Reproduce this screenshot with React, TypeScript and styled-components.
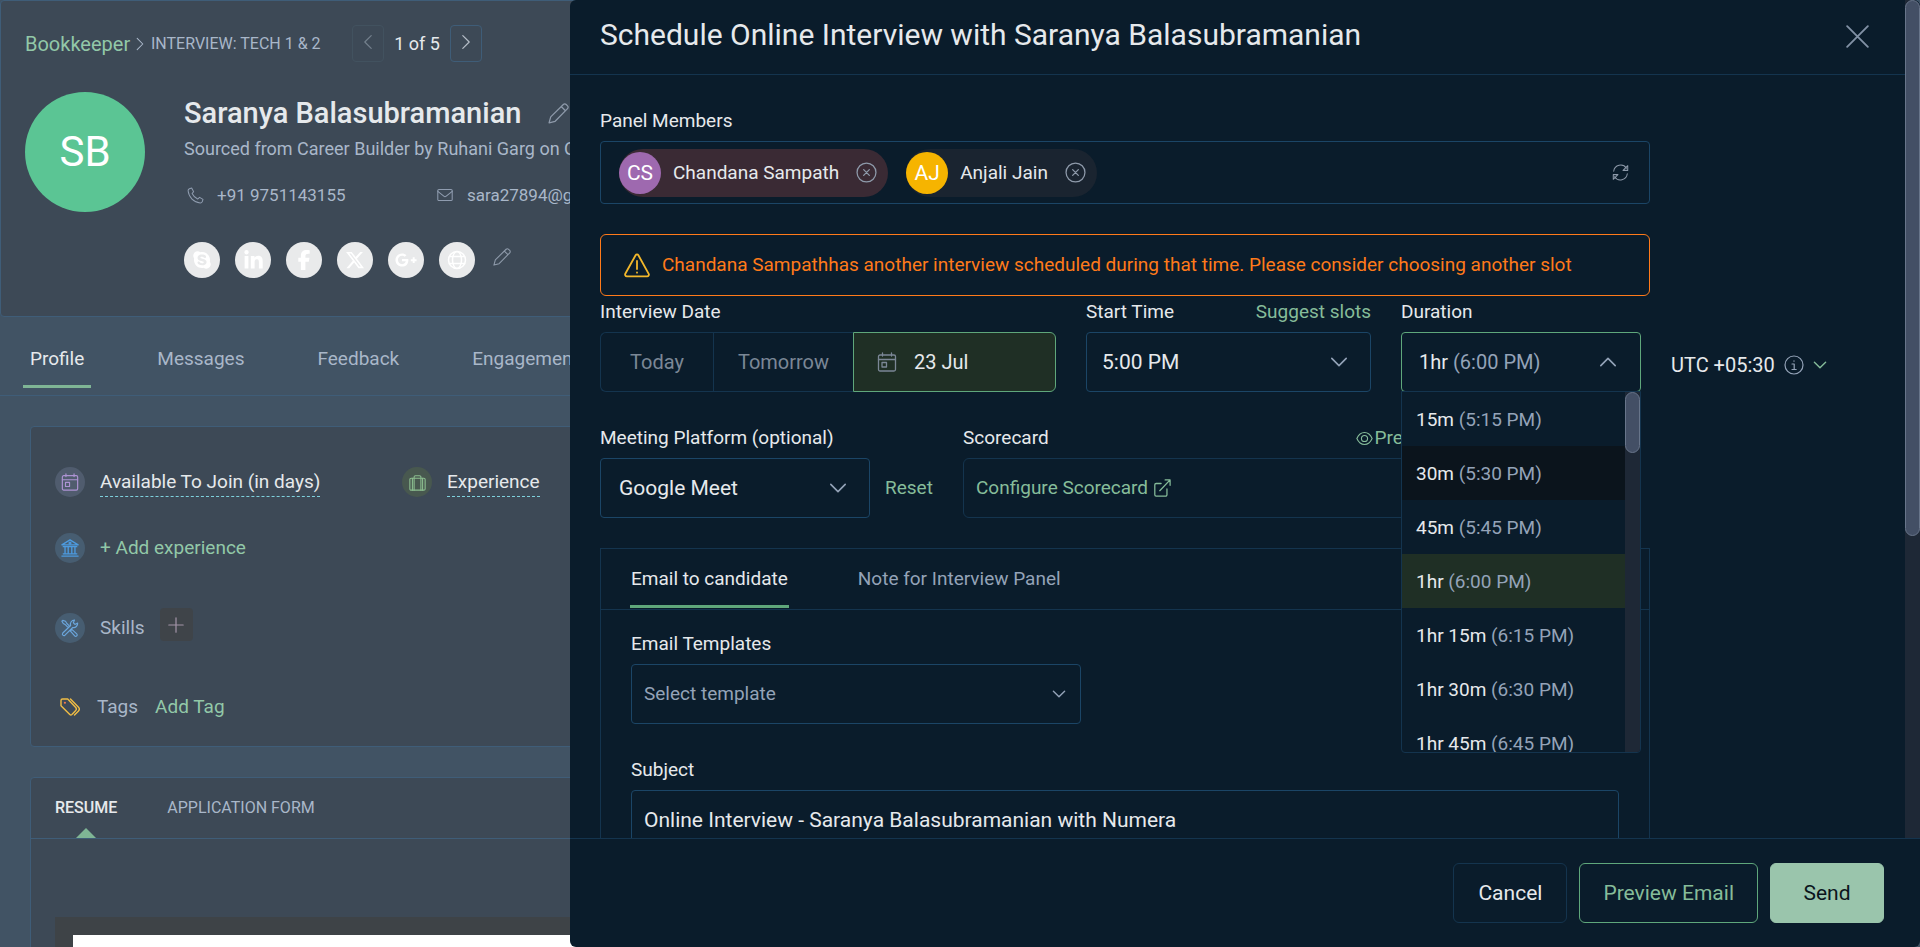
import React, { useState } from "react";
import type { ReactNode } from "react";
import styled, { createGlobalStyle, css } from "styled-components";
import { FaSkype, FaLinkedinIn, FaFacebookF, FaGooglePlusG, FaXTwitter } from "react-icons/fa6";

const color = {
  panel: "#0a1c2b",
  line: "#14344e",
  field: "#1b4566",
  text: "#e6e9ec",
  muted: "#94a3b8",
  dim: "#7b8796",
  green: "#86bc9a",
  greenLine: "#5fa77b",
  greenFill: "#1f2f25",
  orange: "#ff7a1a",
  page: "#415364",
  card: "#3d4956",
  cardLine: "#3f5d78",
  pageMuted: "#a9b7c9",
  pageGreen: "#92c8a8",
  track: "#1e2836",
  thumb: "#434f65",
};

const GlobalStyle = createGlobalStyle`
  *, *::before, *::after { box-sizing: border-box; }
  body {
    margin: 0;
    overflow: hidden;
    background: ${color.page};
    color: ${color.text};
    font: 400 19px/24px Roboto, "Liberation Sans", sans-serif;
  }
  button, input, select { font: inherit; color: inherit; }
  button { background: none; border: 0; padding: 0; cursor: pointer; }
  a { color: inherit; text-decoration: none; }
  h1, h2, p, ul { margin: 0; padding: 0; font-weight: 400; }
  svg { display: block; flex: none; }
`;

/* ---------- icons ---------- */

type IconProps = { size?: number; stroke?: number; box?: string; children: ReactNode };

const Line = ({ size = 20, stroke = 1, box = "0 0 20 20", children }: IconProps) => (
  <svg
    width={size}
    height={size}
    viewBox={box}
    fill="none"
    stroke="currentColor"
    strokeWidth={stroke}
    strokeLinecap="round"
    strokeLinejoin="round"
    aria-hidden="true"
  >
    {children}
  </svg>
);

const Chevron = ({ dir, size, stroke = 2 }: { dir: "up" | "down" | "left" | "right"; size: number; stroke?: number }) => {
  const d = {
    up: "M2 14l8-8 8 8",
    down: "M2 6l8 8 8-8",
    left: "M14 2l-8 8 8 8",
    right: "M6 2l8 8-8 8",
  }[dir];
  return (
    <Line size={size} stroke={stroke}>
      <path d={d} />
    </Line>
  );
};

const Pencil = ({ size }: { size: number }) => (
  <Line size={size} stroke={1.2}>
    <path d="M1 19l1.600-5.800L14.600 1.400a1.900 1.900 0 0 1 2.700 0l1.300 1.300a1.900 1.900 0 0 1 0 2.700L6.800 17.400 1 19zM12.600 3.400l4 4" />
  </Line>
);

const CalendarIcon = ({ size }: { size: number }) => (
  <Line size={size} stroke={1.3}>
    <rect x="1.5" y="3" width="17" height="16" rx="1.5" />
    <path d="M1.5 7.5h17M5.5 1v3M14.5 1v3" />
    <rect x="5" y="10.5" width="4.5" height="4.5" />
  </Line>
);

const CaseIcon = () => (
  <Line size={17} stroke={1.3}>
    <rect x="1" y="5" width="18" height="14" rx="1.5" />
    <path d="M6 19V3.5A1.5 1.5 0 0 1 7.500 2h5A1.500 1.500 0 0 1 14 3.500V19M4 5v14M16 5v14" />
  </Line>
);

const BankIcon = () => (
  <Line size={18} stroke={1.5}>
    <path d="M1 6.500L10 1l9 5.500zM2.500 8.500h15M4.500 8.500v7M8 8.500v7M12 8.500v7M15.500 8.500v7M2.500 16.500h15M1 19h18" />
    <circle cx="10" cy="4.500" r="1" />
  </Line>
);

const ToolsIcon = () => (
  <Line size={18} stroke={1.3}>
    <path d="M2 1.500l3 1 1.500 2.500 3 3-1.500 1.500-3-3L2.500 5 1 2.500zM12 11.500l5.500 5a1.600 1.600 0 0 1-2.300 2.300L10.500 13.500zM18.500 4.500l-3 1.500-1.800-1.800L15 1.200a4.500 4.500 0 0 0-4.300 6L2 15.600A1.700 1.700 0 0 0 4.400 18l8.700-8.600a4.500 4.500 0 0 0 5.400-4.900z" />
  </Line>
);

const TagIcon = () => (
  <Line size={20} stroke={1.4}>
    <path d="M1 3.500v5.200L9.800 17.500a1.500 1.500 0 0 0 2.100 0l3.600-3.700a2.500 2.500 0 0 0 0-3.500L7.700 2H2.500A1.500 1.500 0 0 0 1 3.500zM10.500 2l7.800 8a3 3 0 0 1 0 4.200L14.500 18" />
    <path d="M4.800 5.800h.2" stroke="#ef7a4d" strokeWidth="2" />
  </Line>
);

const PhoneIcon = () => (
  <Line size={17} stroke={1.2}>
    <path d="M5.500 1.200L2.800 2C1.700 2.500 1.200 3.200 1.300 4.500 2 12 8 18 15.500 18.700c1.300.1 2-.4 2.500-1.500l.8-2.700-4-2.300-2.300 2c-2.900-1.400-5-3.600-6.500-6.600l1.800-2.100z" />
  </Line>
);

const MailIcon = () => (
  <Line size={16} stroke={1.3}>
    <rect x="1" y="3" width="18" height="14" rx="1.500" />
    <path d="M1 5.500l7.500 6a2.300 2.300 0 0 0 3 0l7.500-6" />
  </Line>
);

const GlobeIcon = () => (
  <Line size={20} stroke={1.500}>
    <circle cx="10" cy="10" r="8.500" />
    <ellipse cx="10" cy="10" rx="4.500" ry="8.500" />
    <path d="M2.500 6.500h15M2.500 13.500h15" />
  </Line>
);

const EyeIcon = () => (
  <Line size={17} stroke={1.300}>
    <path d="M1 10C3 5.500 6.200 3 10 3s7 2.500 9 7c-2 4.500-5.200 7-9 7s-7-2.500-9-7z" />
    <circle cx="10" cy="10" r="3.600" />
  </Line>
);

const OpenIcon = () => (
  <Line size={18} stroke={1.400}>
    <path d="M9 5H3.500A1.500 1.500 0 0 0 2 6.500v11A1.500 1.500 0 0 0 3.500 19h10.500a1.500 1.500 0 0 0 1.500-1.500V11M7.500 13L19 1M13.500 1H19v6" />
  </Line>
);

const RefreshIcon = () => (
  <Line size={17} stroke={1.200}>
    <path d="M2 8.500a8.200 8.200 0 0 1 15-3.500M18 11.500A8.200 8.200 0 0 1 3 15M18.500 2v5.500H13zM1.500 18v-5.500H7z" />
  </Line>
);

const WarningIcon = () => (
  <Line size={26} stroke={1.800} box="0 0 26 26">
    <path d="M11.600 3.300L1.300 21.800A1.700 1.700 0 0 0 2.800 24.300h20.400a1.700 1.700 0 0 0 1.500-2.500L14.400 3.300a1.600 1.600 0 0 0-2.800 0zM13 9v8M13 20.300v.4" />
  </Line>
);

const InfoIcon = () => (
  <Line size={20} stroke={1.200}>
    <circle cx="10" cy="10" r="9" />
    <path d="M8 9h2.200v5.500M8 14.500h4.200M10 5.800v.4" />
  </Line>
);

const RemoveIcon = () => (
  <Line size={21} stroke={1.200}>
    <circle cx="10" cy="10" r="9" />
    <path d="M7.300 7.300l5.400 5.400M12.700 7.300l-5.400 5.400" />
  </Line>
);

/* ---------- candidate page ---------- */

const Screen = styled.div`
  position: relative;
  height: 100vh;
  overflow: hidden;
`;

const ProfileCard = styled.header`
  padding: 24px 24px 38px;
  background: ${color.card};
  border: 1px solid ${color.cardLine};
  border-radius: 4px;
  white-space: nowrap;
`;

const CrumbRow = styled.nav`
  display: flex;
  align-items: center;
  height: 37px;
`;

const CrumbLink = styled.a`
  color: ${color.pageGreen};
  width: 108px;
  font-size: 20px;
`;

const CrumbArrow = styled.span`
  width: 18px;
  color: ${color.pageMuted};
`;

const Stage = styled.span`
  width: 201px;
  font-size: 16px;
  color: ${color.pageMuted};
`;

const PagerButton = styled.button`
  display: flex;
  align-items: center;
  justify-content: center;
  width: 32px;
  height: 37px;
  padding-bottom: 3px;
  border: 1px solid ${color.cardLine};
  border-radius: 4px;
  color: #b6bec8;
  &:disabled {
    border-color: #42525f;
    color: #74808d;
  }
`;

const PagerText = styled.span`
  width: 66px;
  text-align: center;
  font-size: 18px;
`;

const Identity = styled.div`
  display: flex;
  gap: 39px;
  margin-top: 30px;
`;

const Avatar = styled.div<{ $size: number; $text: number; $bg: string }>`
  display: flex;
  align-items: center;
  justify-content: center;
  flex: none;
  width: ${(p) => p.$size}px;
  height: ${(p) => p.$size}px;
  border-radius: 50%;
  background: ${(p) => p.$bg};
  color: #fff;
  font-size: ${(p) => p.$text}px;
`;

const Details = styled.div`
  padding-top: 3px;
`;

const NameRow = styled.div`
  display: flex;
  align-items: center;
  gap: 27px;
  h1 {
    font-size: 29px;
    line-height: 36px;
    font-weight: 500;
  }
`;

const IconButton = styled.button`
  color: #8e9aaa;
`;

const Source = styled.p`
  margin-top: 6px;
  font-size: 18px;
  color: ${color.pageMuted};
`;

const Contacts = styled.div`
  display: flex;
  margin-top: 22px;
  font-size: 17px;
  color: ${color.pageMuted};
`;

const Contact = styled.a`
  display: flex;
  align-items: center;
  gap: 11px;
  width: 250px;
  span {
    display: flex;
    justify-content: center;
    width: 22px;
    color: #8f9caf;
  }
`;

const Socials = styled.div`
  display: flex;
  gap: 15px;
  margin-top: 35px;
`;

const Social = styled.a`
  display: flex;
  align-items: center;
  justify-content: center;
  width: 36px;
  height: 36px;
  border-radius: 50%;
  background: #e9eaeb;
  color: #fff;
`;

const SocialEdit = styled(IconButton)`
  display: flex;
  padding: 6px 3px;
`;

const PageTabs = styled.nav`
  display: flex;
  gap: 59px;
  padding: 0 23px 7px;
  border-bottom: 1px solid ${color.cardLine};
`;

const PageTab = styled.button<{ $active?: boolean }>`
  display: flex;
  height: 71px;
  padding: 30px 7px 0;
  border-bottom: 3px solid ${(p) => (p.$active ? "#7fb595" : "transparent")};
  color: ${(p) => (p.$active ? color.text : color.pageMuted)};
`;

const PageBody = styled.main`
  display: flex;
  flex-direction: column;
  gap: 30px;
  padding: 30px;
`;

const Card = styled.section`
  background: ${color.card};
  border: 1px solid ${color.cardLine};
  border-radius: 4px;
  white-space: nowrap;
`;

const Facts = styled(Card)`
  padding: 40px 24px 24px;
`;

const FactRow = styled.div<{ $top?: number }>`
  display: flex;
  margin-top: ${(p) => p.$top ?? 0}px;
  line-height: 30px;
`;

const Fact = styled.div`
  display: flex;
  gap: 15px;
  width: 347px;
`;

const SkillsRow = styled(FactRow)`
  align-items: flex-end;
  gap: 15px;
  height: 35px;
  color: ${color.pageMuted};
`;

const TagsRow = styled(FactRow)`
  color: ${color.pageMuted};
`;

const TagsLabel = styled.span`
  margin: 0 17px 0 12px;
`;

const Bubble = styled.span<{ $bg?: string; $fg: string }>`
  display: flex;
  align-items: center;
  justify-content: center;
  flex: none;
  width: 30px;
  height: 30px;
  border-radius: 50%;
  background: ${(p) => p.$bg ?? "none"};
  color: ${(p) => p.$fg};
`;

const Hinted = styled.span`
  height: 30px;
  border-bottom: 1px dashed #7ed0dc;
`;

const GreenAction = styled.button`
  color: ${color.pageGreen};
`;

const AddSkill = styled.button`
  display: flex;
  align-items: center;
  justify-content: center;
  align-self: flex-start;
  width: 33px;
  height: 33px;
  border-radius: 4px;
  background: #3f4449;
  color: #a394a8;
`;

const DocTabs = styled.nav`
  display: flex;
  gap: 50px;
  padding: 0 24px;
  border-bottom: 1px solid ${color.cardLine};
`;

const DocTab = styled.button<{ $active?: boolean }>`
  position: relative;
  height: 60px;
  font-size: 16px;
  font-weight: ${(p) => (p.$active ? 500 : 400)};
  color: ${(p) => (p.$active ? color.text : color.pageMuted)};
  ${(p) =>
    p.$active &&
    css`
      &::after {
        content: "";
        position: absolute;
        left: calc(50% - 10px);
        bottom: 0;
        border: 10px solid transparent;
        border-top: 0;
        border-bottom-color: #7fb595;
      }
    `}
`;

const DocViewer = styled.div`
  margin: 78px 24px 24px;
  padding: 18px;
  background: #3e4347;
`;

const Paper = styled.div`
  height: 400px;
  background: #fff;
`;

/* ---------- interview drawer ---------- */

const Drawer = styled.aside`
  position: absolute;
  inset: 0 0 0 570px;
  display: flex;
  flex-direction: column;
  overflow: hidden;
  background: ${color.panel};
  border-radius: 6px;
`;

const DrawerMiddle = styled.div`
  display: flex;
  flex: 1;
  min-height: 0;
`;

const DrawerScroll = styled.div`
  flex: 1;
  min-width: 0;
  overflow: auto;
  scrollbar-width: none;
`;

const ScrollTrack = styled.div`
  flex: none;
  width: 15px;
  background: ${color.track};
`;

const ScrollThumb = styled.div<{ $share: number }>`
  height: ${(p) => p.$share}%;
  border: 1px solid #68758a;
  border-radius: 8px;
  background: ${color.thumb};
`;

const DrawerHeader = styled.header`
  display: flex;
  justify-content: space-between;
  align-items: flex-start;
  height: 75px;
  padding: 16px 36px 0 30px;
  border-bottom: 1px solid ${color.line};
  h2 {
    font-size: 30px;
    line-height: 38px;
  }
`;

const CloseButton = styled.button`
  display: flex;
  padding-top: 9px;
  color: #8291a5;
`;

const Form = styled.form`
  padding: 34px 30px 30px;
`;

const Block = styled.div`
  max-width: 1050px;
`;

const Label = styled.label`
  display: block;
`;

const LabelRow = styled.div`
  display: flex;
  justify-content: space-between;
`;

const GreenLink = styled.a`
  display: inline-flex;
  align-items: center;
  gap: 5px;
  color: ${color.green};
`;

const PreviewLink = styled(GreenLink)`
  gap: 2px;
`;

const ResetButton = styled.button`
  color: ${color.green};
`;

const Members = styled.div`
  display: flex;
  align-items: center;
  gap: 18px;
  height: 63px;
  margin-top: 8px;
  padding: 0 20px 0 18px;
  border: 1px solid ${color.field};
  border-radius: 4px;
`;

const MemberInput = styled.input`
  flex: 1;
  min-width: 0;
  border: 0;
  outline: 0;
  background: none;
`;

const Chip = styled.div<{ $conflict?: boolean }>`
  display: flex;
  align-items: center;
  height: 48px;
  padding-right: 11px;
  border-radius: 24px;
  background: ${(p) => (p.$conflict ? "#3a2a34" : "#1a2430")};
  white-space: nowrap;
`;

const ChipName = styled.span`
  margin: 0 17px 0 12px;
`;

const Alert = styled.div`
  display: flex;
  align-items: center;
  gap: 12px;
  height: 62px;
  margin: 30px 0 4px;
  padding: 0 23px;
  border: 1px solid ${color.orange};
  border-radius: 6px;
  color: ${color.orange};
  svg {
    color: #f2b72b;
  }
`;

const FieldRow = styled.div`
  display: flex;
  gap: 30px;
  white-space: nowrap;
  & + & {
    margin: 34px 0 30px;
  }
`;

const Field = styled.div<{ $width?: number }>`
  position: relative;
  flex: none;
  width: ${(p) => (p.$width ? p.$width + "px" : "auto")};
`;

const Controls = styled.div`
  display: flex;
  gap: 15px;
  margin-top: 8px;
`;

const DayGroup = styled.div`
  display: grid;
  grid-template-columns: 113px 140px 1fr;
  height: 60px;
  margin-top: 8px;
  font-size: 20px;
`;

const DayButton = styled.button<{ $active?: boolean }>`
  display: flex;
  align-items: center;
  justify-content: ${(p) => (p.$active ? "flex-start" : "center")};
  gap: 17px;
  padding: 0 ${(p) => (p.$active ? 23 : 0)}px;
  border: 1px solid ${(p) => (p.$active ? color.greenLine : color.line)};
  border-right-width: ${(p) => (p.$active ? 1 : 0)}px;
  background: ${(p) => (p.$active ? color.greenFill : "none")};
  color: ${(p) => (p.$active ? color.text : color.dim)};
  &:first-child {
    border-radius: 6px 0 0 6px;
  }
  &:last-child {
    border-radius: 0 6px 6px 0;
  }
  svg {
    color: ${color.dim};
  }
`;

const SelectWrap = styled.div<{ $width?: number }>`
  position: relative;
  flex: none;
  width: ${(p) => (p.$width ? p.$width + "px" : "100%")};
`;

const Select = styled.select<{ $pad: number; $quiet?: boolean }>`
  appearance: none;
  width: 100%;
  height: 60px;
  padding: 0 40px 0 ${(p) => p.$pad}px;
  border: 1px solid ${color.field};
  border-radius: 4px;
  background: none;
  outline: 0;
  font-size: ${(p) => (p.$quiet ? 19 : 21)}px;
  color: ${(p) => (p.$quiet ? color.muted : color.text)};
`;

const SelectArrow = styled.span<{ $right: number }>`
  position: absolute;
  top: 0;
  right: ${(p) => p.$right}px;
  display: flex;
  align-items: center;
  height: 60px;
  color: ${color.muted};
  pointer-events: none;
`;

const ComboButton = styled.button`
  display: flex;
  align-items: center;
  justify-content: space-between;
  width: 100%;
  height: 60px;
  margin-top: 8px;
  padding: 0 23px 0 17px;
  border: 1px solid ${color.greenLine};
  border-radius: 4px;
  font-size: 20px;
  svg {
    color: ${color.muted};
  }
`;

const Until = styled.span`
  color: ${color.muted};
`;

const Menu = styled.div`
  position: absolute;
  z-index: 2;
  top: 91px;
  left: 0;
  right: 0;
  display: flex;
  height: 362px;
  overflow: hidden;
  background: ${color.panel};
  border: 1px solid ${color.line};
  border-radius: 0 0 4px 4px;
`;

const MenuList = styled.ul`
  flex: 1;
  overflow: auto;
  scrollbar-width: none;
  list-style: none;
`;

const MenuItem = styled.li<{ $bg?: string }>`
  height: 54px;
  padding: 0 14px;
  line-height: 56px;
  background: ${(p) => p.$bg ?? "none"};
`;

const ZoneButton = styled.button`
  display: flex;
  align-items: center;
  align-self: flex-end;
  gap: 9px;
  height: 54px;
  font-size: 20px;
  svg {
    color: ${color.muted};
  }
  svg:last-child {
    color: ${color.green};
  }
`;

const ScorecardBox = styled.div`
  display: flex;
  align-items: center;
  height: 60px;
  margin-top: 8px;
  padding: 0 12px;
  border: 1px solid ${color.line};
  border-radius: 6px;
`;

const EmailCard = styled(Block)`
  border: 1px solid ${color.line};
`;

const EmailTabs = styled.div`
  display: flex;
  gap: 68px;
  padding: 0 29px 1px;
  border-bottom: 1px solid ${color.line};
`;

const EmailTab = styled.button<{ $active?: boolean }>`
  height: 59px;
  padding: 4px 1px 0;
  border-bottom: 3px solid ${(p) => (p.$active ? color.greenLine : "transparent")};
  color: ${(p) => (p.$active ? color.text : color.muted)};
`;

const EmailFields = styled.div`
  display: flex;
  flex-direction: column;
  gap: 34px;
  padding: 22px 30px 30px;
`;

const TextInput = styled.input`
  display: block;
  width: 100%;
  height: 60px;
  margin-top: 8px;
  padding: 0 12px;
  border: 1px solid ${color.field};
  border-radius: 4px;
  background: none;
  outline: 0;
  font-size: 21px;
`;

const DrawerFooter = styled.footer`
  display: flex;
  justify-content: flex-end;
  gap: 12px;
  padding: 24px 36px;
  border-top: 1px solid ${color.line};
`;

const FooterButton = styled.button<{ $kind: "plain" | "outline" | "solid" }>`
  min-width: 114px;
  height: 60px;
  padding: 0 23px;
  border: 1px solid
    ${(p) => ({ plain: color.line, outline: color.greenLine, solid: "#9ac5ac" })[p.$kind]};
  border-radius: 6px;
  background: ${(p) => (p.$kind === "solid" ? "#9ac5ac" : "none")};
  color: ${(p) => ({ plain: color.text, outline: color.green, solid: "#0b151c" })[p.$kind]};
  font-size: 21px;
`;

const members = [
  { initials: "CS", name: "Chandana Sampath", bg: "#9e69af", conflict: true },
  { initials: "AJ", name: "Anjali Jain", bg: "#f6b400", conflict: false },
];

const durations = [
  ["15m", "(5:15 PM)"],
  ["30m", "(5:30 PM)"],
  ["45m", "(5:45 PM)"],
  ["1hr", "(6:00 PM)"],
  ["1hr 15m", "(6:15 PM)"],
  ["1hr 30m", "(6:30 PM)"],
  ["1hr 45m", "(6:45 PM)"],
  ["2hr", "(7:00 PM)"],
];

const socials = [
  { name: "Skype", icon: <FaSkype size={20} /> },
  { name: "LinkedIn", icon: <FaLinkedinIn size={21} /> },
  { name: "Facebook", icon: <FaFacebookF size={20} /> },
  { name: "X", icon: <FaXTwitter size={20} /> },
  { name: "Google Plus", icon: <FaGooglePlusG size={22} /> },
  { name: "Website", icon: <GlobeIcon /> },
];

function CandidatePage() {
  return (
    <>
      <ProfileCard>
        <CrumbRow aria-label="Breadcrumb">
          <CrumbLink href="#job">Bookkeeper</CrumbLink>
          <CrumbArrow>
            <Chevron dir="right" size={14} stroke={1.5} />
          </CrumbArrow>
          <Stage>INTERVIEW: TECH 1 &amp; 2</Stage>
          <PagerButton disabled aria-label="Previous candidate">
            <Chevron dir="left" size={16} stroke={1.5} />
          </PagerButton>
          <PagerText>1 of 5</PagerText>
          <PagerButton aria-label="Next candidate">
            <Chevron dir="right" size={16} stroke={1.5} />
          </PagerButton>
        </CrumbRow>
        <Identity>
          <Avatar $size={120} $text={42} $bg="#5bc594">SB</Avatar>
          <Details>
            <NameRow>
              <h1>Saranya Balasubramanian</h1>
              <IconButton aria-label="Edit name">
                <Pencil size={21} />
              </IconButton>
            </NameRow>
            <Source>Sourced from Career Builder by Ruhani Garg on Oct 12, 2023</Source>
            <Contacts>
              <Contact href="tel:+919751143155">
                <span><PhoneIcon /></span>
                +91 9751143155
              </Contact>
              <Contact href="mailto:sara27894@gmail.com">
                <span><MailIcon /></span>
                sara27894@gmail.com
              </Contact>
            </Contacts>
            <Socials>
              {socials.map((s) => (
                <Social key={s.name} href="#social" aria-label={s.name}>
                  {s.icon}
                </Social>
              ))}
              <SocialEdit aria-label="Edit social links">
                <Pencil size={18} />
              </SocialEdit>
            </Socials>
          </Details>
        </Identity>
      </ProfileCard>
      <PageTabs>
        <PageTab $active>Profile</PageTab>
        <PageTab>Messages</PageTab>
        <PageTab>Feedback</PageTab>
        <PageTab>Engagement</PageTab>
      </PageTabs>
      <PageBody>
        <Facts>
          <FactRow>
            <Fact>
              <Bubble $bg="#505c6e" $fg="#ad93d3"><CalendarIcon size={18} /></Bubble>
              <Hinted>Available To Join (in days)</Hinted>
            </Fact>
            <Fact>
              <Bubble $bg="#48584f" $fg="#8bbd8f"><CaseIcon /></Bubble>
              <Hinted>Experience</Hinted>
            </Fact>
          </FactRow>
          <FactRow $top={36}>
            <Fact>
              <Bubble $bg="#475d71" $fg="#4d9be0"><BankIcon /></Bubble>
              <GreenAction>+ Add experience</GreenAction>
            </Fact>
          </FactRow>
          <SkillsRow $top={45}>
            <Bubble $bg="#475d71" $fg="#6ba6dc"><ToolsIcon /></Bubble>
            <span>Skills</span>
            <AddSkill aria-label="Add skill">
              <Line size={16} stroke={1.5}>
                <path d="M10 1v18M1 10h18" />
              </Line>
            </AddSkill>
          </SkillsRow>
          <TagsRow $top={49}>
            <Bubble $fg="#f0bd45"><TagIcon /></Bubble>
            <TagsLabel>Tags</TagsLabel>
            <GreenAction>Add Tag</GreenAction>
          </TagsRow>
        </Facts>
        <Card>
          <DocTabs>
            <DocTab $active>RESUME</DocTab>
            <DocTab>APPLICATION FORM</DocTab>
          </DocTabs>
          <DocViewer>
            <Paper />
          </DocViewer>
        </Card>
      </PageBody>
    </>
  );
}

function DurationField() {
  const [open, setOpen] = useState(true);
  const [picked, setPicked] = useState(3);
  return (
    <Field $width={240}>
      <Label id="duration-label">Duration</Label>
      <ComboButton
        type="button"
        aria-haspopup="listbox"
        aria-expanded={open}
        aria-labelledby="duration-label"
        onClick={() => setOpen(!open)}
      >
        <span>
          {durations[picked][0]} <Until>{durations[picked][1]}</Until>
        </span>
        <Chevron dir={open ? "up" : "down"} size={18} stroke={1.8} />
      </ComboButton>
      {open && (
        <Menu>
          <MenuList role="listbox" aria-labelledby="duration-label">
            {durations.map(([length, until], i) => (
              <MenuItem
                key={length}
                role="option"
                aria-selected={i === picked}
                $bg={i === picked ? color.greenFill : i === 1 ? "#0b141c" : undefined}
                onClick={() => setPicked(i)}
              >
                {length} <Until>{until}</Until>
              </MenuItem>
            ))}
          </MenuList>
          <ScrollTrack>
            <ScrollThumb $share={17} />
          </ScrollTrack>
        </Menu>
      )}
    </Field>
  );
}

function InterviewDrawer() {
  return (
    <Drawer role="dialog" aria-labelledby="drawer-title">
      <DrawerMiddle>
        <DrawerScroll>
          <DrawerHeader>
            <h2 id="drawer-title">Schedule Online Interview with Saranya Balasubramanian</h2>
            <CloseButton aria-label="Close">
              <Line size={23} stroke={1.6}>
                <path d="M1 1l18 18M19 1L1 19" />
              </Line>
            </CloseButton>
          </DrawerHeader>
          <Form onSubmit={(e) => e.preventDefault()}>
            <Block>
              <Label htmlFor="members">Panel Members</Label>
              <Members>
                {members.map((m) => (
                  <Chip key={m.name} $conflict={m.conflict}>
                    <Avatar $size={42} $text={21} $bg={m.bg}>{m.initials}</Avatar>
                    <ChipName>{m.name}</ChipName>
                    <IconButton type="button" aria-label={`Remove ${m.name}`}>
                      <RemoveIcon />
                    </IconButton>
                  </Chip>
                ))}
                <MemberInput id="members" />
                <IconButton type="button" aria-label="Refresh">
                  <RefreshIcon />
                </IconButton>
              </Members>
              <Alert role="alert">
                <WarningIcon />
                Chandana Sampathhas another interview scheduled during that time. Please consider choosing another slot
              </Alert>
            </Block>
            <FieldRow>
              <Field $width={456}>
                <Label as="div">Interview Date</Label>
                <DayGroup>
                  <DayButton type="button">Today</DayButton>
                  <DayButton type="button">Tomorrow</DayButton>
                  <DayButton type="button" $active>
                    <CalendarIcon size={20} />
                    23 Jul
                  </DayButton>
                </DayGroup>
              </Field>
              <Field $width={285}>
                <LabelRow>
                  <Label htmlFor="start">Start Time</Label>
                  <GreenLink href="#slots">Suggest slots</GreenLink>
                </LabelRow>
                <Controls>
                  <SelectWrap>
                    <Select id="start" $pad={15}>
                      <option>5:00 PM</option>
                    </Select>
                    <SelectArrow $right={23}>
                      <Chevron dir="down" size={18} stroke={1.8} />
                    </SelectArrow>
                  </SelectWrap>
                </Controls>
              </Field>
              <DurationField />
              <ZoneButton type="button">
                UTC +05:30
                <InfoIcon />
                <Chevron dir="down" size={14} stroke={2} />
              </ZoneButton>
            </FieldRow>
            <FieldRow>
              <Field $width={333}>
                <Label htmlFor="platform">Meeting Platform (optional)</Label>
                <Controls>
                  <SelectWrap $width={270}>
                    <Select id="platform" $pad={18}>
                      <option>Google Meet</option>
                    </Select>
                    <SelectArrow $right={23}>
                      <Chevron dir="down" size={18} stroke={1.8} />
                    </SelectArrow>
                  </SelectWrap>
                  <ResetButton type="button">Reset</ResetButton>
                </Controls>
              </Field>
              <Field $width={478}>
                <LabelRow>
                  <Label as="div">Scorecard</Label>
                  <PreviewLink href="#preview">
                    <EyeIcon />
                    Preview
                  </PreviewLink>
                </LabelRow>
                <ScorecardBox>
                  <GreenLink href="#scorecard">
                    Configure Scorecard
                    <OpenIcon />
                  </GreenLink>
                </ScorecardBox>
              </Field>
            </FieldRow>
            <EmailCard>
              <EmailTabs role="tablist">
                <EmailTab type="button" role="tab" aria-selected $active>
                  Email to candidate
                </EmailTab>
                <EmailTab type="button" role="tab" aria-selected={false}>
                  Note for Interview Panel
                </EmailTab>
              </EmailTabs>
              <EmailFields>
                <Field $width={450}>
                  <Label htmlFor="template">Email Templates</Label>
                  <Controls>
                    <SelectWrap>
                      <Select id="template" $pad={12} $quiet>
                        <option>Select template</option>
                      </Select>
                      <SelectArrow $right={15}>
                        <Chevron dir="down" size={14} stroke={2} />
                      </SelectArrow>
                    </SelectWrap>
                  </Controls>
                </Field>
                <Field>
                  <Label htmlFor="subject">Subject</Label>
                  <TextInput id="subject" defaultValue="Online Interview - Saranya Balasubramanian with Numera" />
                </Field>
              </EmailFields>
            </EmailCard>
          </Form>
        </DrawerScroll>
        <ScrollTrack>
          <ScrollThumb $share={64} />
        </ScrollTrack>
      </DrawerMiddle>
      <DrawerFooter>
        <FooterButton type="button" $kind="plain">Cancel</FooterButton>
        <FooterButton type="button" $kind="outline">Preview Email</FooterButton>
        <FooterButton type="submit" $kind="solid">Send</FooterButton>
      </DrawerFooter>
    </Drawer>
  );
}

export default function App() {
  return (
    <Screen>
      <GlobalStyle />
      <CandidatePage />
      <InterviewDrawer />
    </Screen>
  );
}
